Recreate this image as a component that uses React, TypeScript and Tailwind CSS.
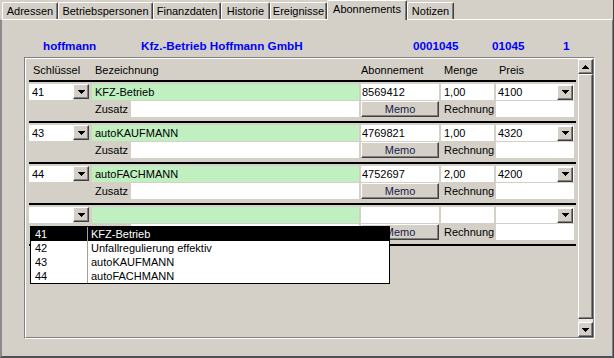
import React from 'react';

const raised =
  'bg-[#d4d0c8] border border-t-white border-l-white border-r-[#404040] border-b-[#404040] shadow-[inset_-1px_-1px_0_#808080]';

type Row = { k: string; name: string; abo: string; menge: string; preis: string; open?: boolean };

const rows: Row[] = [
  { k: '41', name: 'KFZ-Betrieb', abo: '8569412', menge: '1,00', preis: '4100' },
  { k: '43', name: 'autoKAUFMANN', abo: '4769821', menge: '1,00', preis: '4320' },
  { k: '44', name: 'autoFACHMANN', abo: '4752697', menge: '2,00', preis: '4200' },
  { k: '', name: '', abo: '', menge: '', preis: '', open: true },
];

const options = [
  { k: '41', name: 'KFZ-Betrieb' },
  { k: '42', name: 'Unfallregulierung effektiv' },
  { k: '43', name: 'autoKAUFMANN' },
  { k: '44', name: 'autoFACHMANN' },
];

const tabs = [
  { label: 'Adressen', w: 'w-[56px]' },
  { label: 'Betriebspersonen', w: 'w-[95px]' },
  { label: 'Finanzdaten', w: 'w-[68px]' },
  { label: 'Historie', w: 'w-[49px]' },
  { label: 'Ereignisse', w: 'w-[57px]' },
  { label: 'Abonnements', w: 'w-[80px]', active: true },
  { label: 'Notizen', w: 'w-[47px]' },
];

const ArrowDown = () => (
  <svg width="7" height="4" viewBox="0 0 7 4" shapeRendering="crispEdges">
    <rect x="0" y="0" width="7" height="1" fill="#000" />
    <rect x="1" y="1" width="5" height="1" fill="#000" />
    <rect x="2" y="2" width="3" height="1" fill="#000" />
    <rect x="3" y="3" width="1" height="1" fill="#000" />
  </svg>
);

const ArrowUp = () => (
  <svg width="7" height="4" viewBox="0 0 7 4" shapeRendering="crispEdges">
    <rect x="3" y="0" width="1" height="1" fill="#000" />
    <rect x="2" y="1" width="3" height="1" fill="#000" />
    <rect x="1" y="2" width="5" height="1" fill="#000" />
    <rect x="0" y="3" width="7" height="1" fill="#000" />
  </svg>
);

const DropBtn = ({ className = '' }: { className?: string }) => (
  <div className={`w-[16px] h-[15px] flex items-center justify-center ${raised} ${className}`}>
    <ArrowDown />
  </div>
);

const AboRow = ({ row }: { row: Row }) => (
  <div className="relative border-t-2 border-black pt-[2px] pb-[4px]">
    <div className="flex h-[16px] leading-[16px]">
      <div className="w-[44px] bg-white pl-[3px]">{row.k}</div>
      <DropBtn />
      <div className="w-[3px]" />
      <div className="w-[267px] bg-[#c0f0c0] pl-[3px]">{row.name}</div>
      <div className="w-[2px]" />
      <div className="w-[78px] bg-white pl-[1px]">{row.abo}</div>
      <div className="w-[2px]" />
      <div className="w-[53px] bg-white pl-[3px]">{row.menge}</div>
      <div className="w-[2px]" />
      <div className="w-[78px] bg-white pl-[2px] flex items-center justify-between">
        <span>{row.preis}</span>
        <DropBtn className="mr-[1px] h-[14px]" />
      </div>
    </div>
    <div className="h-[1px]" />
    <div className="flex h-[16px] leading-[16px]">
      <div className="w-[63px]" />
      <div className="w-[39px] pl-[3px]">Zusatz</div>
      <div className="w-[228px] bg-white" />
      <div className="w-[2px]" />
      <div className={`w-[78px] text-center leading-[14px] text-[#1a1a48] ${raised}`}>Memo</div>
      <div className="w-[2px]" />
      <div className="w-[53px] pl-[3px]">Rechnung</div>
      <div className="w-[2px]" />
      <div className="w-[78px] bg-white" />
    </div>

    {row.open && (
      <div className="absolute left-[1px] top-[21px] w-[360px] border border-black bg-white z-20">
        {options.map((o, i) => (
          <div
            key={o.k}
            className={`flex h-[14px] leading-[14px] ${i === 0 ? 'bg-black text-white' : 'text-black'}`}
          >
            <div className="w-[57px] pl-[4px] border-r border-[#a0a0a0]">{o.k}</div>
            <div className="pl-[3px]">{o.name}</div>
          </div>
        ))}
      </div>
    )}
  </div>
);

const Scrollbar = () => (
  <div className="w-[15px] flex flex-col">
    <div className={`h-[15px] flex items-center justify-center ${raised}`}>
      <ArrowUp />
    </div>
    <div className={`flex-1 ${raised}`} />
    <div className="h-[3px] bg-[#ebe9e4]" />
    <div className={`h-[15px] flex items-center justify-center ${raised}`}>
      <ArrowDown />
    </div>
  </div>
);

export default function App() {
  return (
    <div className="w-[614px] h-[358px] bg-[#d4d0c8] flex flex-col overflow-hidden border-r border-[#404040] text-[11px] text-black font-['Liberation_Sans',Arial,sans-serif]">
      {/* tabs */}
      <div className="h-[19px] flex items-end pl-[2px]">
        {tabs.map((t) =>
          t.active ? (
            <div
              key={t.label}
              className={`${t.w} relative z-10 -mb-[1px] h-[20px] bg-[#d4d0c8] border-t border-l border-white border-r border-r-[#404040] shadow-[inset_-1px_0_0_#808080] rounded-t-[2px] text-center leading-[17px]`}
            >
              {t.label}
            </div>
          ) : (
            <div
              key={t.label}
              className={`${t.w} h-[17px] bg-[#d4d0c8] border-t border-l border-white border-r border-r-[#404040] shadow-[inset_-1px_0_0_#808080] rounded-t-[2px] text-center leading-[16px]`}
            >
              {t.label}
            </div>
          )
        )}
      </div>

      {/* panel */}
      <div className="flex-1 border-t border-white border-l-2 border-l-[#8a8a8a] border-b-2 border-b-[#505050] border-r border-r-[#808080] flex flex-col">
        <div className="pt-[19px] pl-[41px] flex h-[33px] leading-[14px] font-bold text-[11.7px] text-[#0000ff]">
          <span className="w-[98px]">hoffmann</span>
          <span className="w-[272px]">Kfz.-Betrieb Hoffmann GmbH</span>
          <span className="w-[79px]">0001045</span>
          <span className="w-[71px]">01045</span>
          <span>1</span>
        </div>

        {/* group box */}
        <div className="mt-[4px] ml-[22px] w-[571px] h-[282px] border border-t-[#808080] border-l-[#808080] border-r-white border-b-white">
          <div className="w-full h-full border border-t-white border-l-white border-r-[#808080] border-b-[#808080] flex">
            <div className="w-[552px] pl-[3px]">
              <div className="w-[547px]">
                <div className="flex h-[21px] pt-[3px] leading-[16px]">
                  <div className="w-[63px] pl-[4px]">Schlüssel</div>
                  <div className="w-[269px] pl-[3px]">Bezeichnung</div>
                  <div className="w-[80px]">Abonnement</div>
                  <div className="w-[55px] pl-[3px]">Menge</div>
                  <div className="pl-[3px]">Preis</div>
                </div>
                {rows.map((r, i) => (
                  <AboRow key={i} row={r} />
                ))}
                <div className="h-[2px] bg-black" />
              </div>
            </div>
            <Scrollbar />
          </div>
        </div>
      </div>
    </div>
  );
}
